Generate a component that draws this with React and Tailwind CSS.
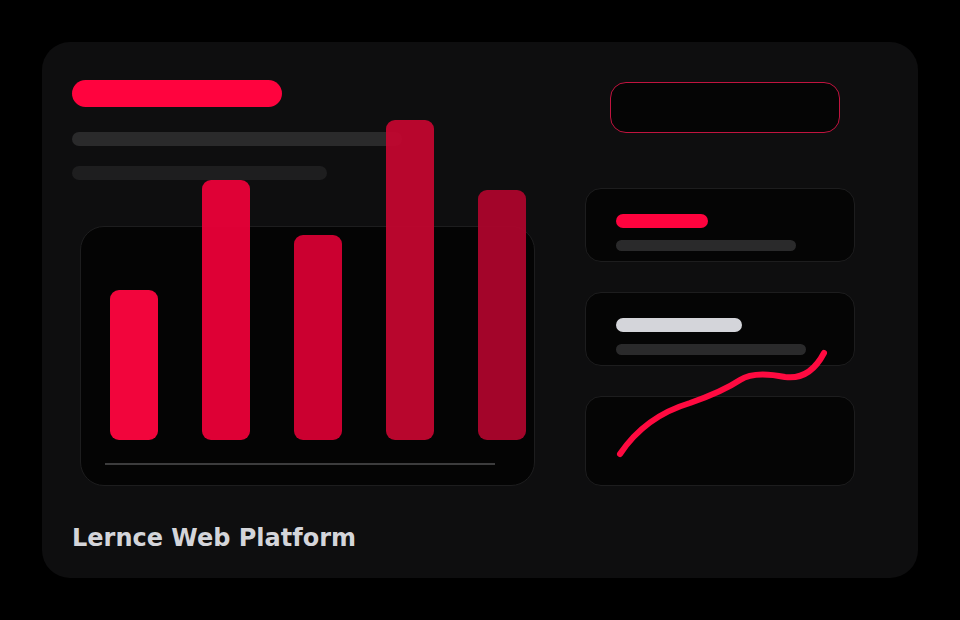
const bars = [
  { h: 150, color: 'bg-[#ff053f]/95' },
  { h: 260, color: 'bg-[#ea0038]/95' },
  { h: 205, color: 'bg-[#d60033]/95' },
  { h: 320, color: 'bg-[#c2062f]/95' },
  { h: 250, color: 'bg-[#ac052c]/95' },
];

function MiniCard({ children, className = '' }) {
  return (
    <div className={`rounded-[16px] border border-[#1d1d1e] bg-[#050505] ${className}`}>
      {children}
    </div>
  );
}

export default function App() {
  return (
    <div className="w-[960px] h-[620px] bg-black p-[42px] font-['DejaVu_Sans',sans-serif]">
      <div className="relative w-[876px] h-[536px] rounded-[28px] bg-[#0e0e0f] pt-[38px] pl-[30px]">
        <div className="flex gap-[50px]">
          {/* left side: heading lines + bar chart */}
          <div className="w-[463px]">
            <div className="w-[210px] h-[27px] rounded-full bg-[#ff033e]" />
            <div className="mt-[25px] w-[330px] h-[14px] rounded-full bg-[#2a2a2b]" />
            <div className="mt-[20px] w-[255px] h-[14px] rounded-full bg-[#1e1e1f]" />
            <div className="mt-[46px] ml-[8px] w-[455px] h-[260px] rounded-[24px] border border-[#1d1d1e] bg-[#040404] flex flex-col justify-end pb-[20px] pl-[24px] pr-[39px]">
              <div className="flex items-end gap-[44px] pl-[5px] shrink-0">
                {bars.map((b, i) => (
                  <div
                    key={i}
                    className={`w-[48px] shrink-0 rounded-[9px] ${b.color}`}
                    style={{ height: b.h }}
                  />
                ))}
              </div>
              <div className="mt-[23px] h-[2px] w-[390px] shrink-0 bg-[#3c3c3d]" />
            </div>
          </div>

          {/* right side: widgets */}
          <div className="w-[270px]">
            <div className="mt-[2px] ml-[25px] w-[230px] h-[51px] rounded-[16px] border border-[#c0143f] bg-[#050505]" />
            <MiniCard className="mt-[55px] h-[74px] pt-[25px] pl-[30px]">
              <div className="w-[92px] h-[14px] rounded-full bg-[#ff033e]" />
              <div className="mt-[12px] w-[180px] h-[11px] rounded-full bg-[#2a2a2b]" />
            </MiniCard>
            <MiniCard className="mt-[30px] h-[74px] pt-[25px] pl-[30px]">
              <div className="w-[126px] h-[14px] rounded-full bg-[#d4d5da]" />
              <div className="mt-[12px] w-[190px] h-[11px] rounded-full bg-[#2a2a2b]" />
            </MiniCard>
            <MiniCard className="mt-[30px] h-[90px]" />
          </div>
        </div>

        <div className="mt-[40px] text-[24px] leading-none font-bold text-[#d4d5da]">
          Lernce Web Platform
        </div>

        {/* trend line drawn over the widget cards */}
        <svg
          className="absolute inset-0 w-full h-full pointer-events-none"
          viewBox="42 42 876 536"
        >
          <path
            d="M620 454 C 636 430, 660 412, 690 403 C 710 396, 725 390, 740 380 C 752 372, 770 374, 785 377 C 800 379, 814 372, 824 353"
            fill="none"
            stroke="#ff0a40"
            strokeWidth="6"
            strokeLinecap="round"
          />
        </svg>
      </div>
    </div>
  );
}
